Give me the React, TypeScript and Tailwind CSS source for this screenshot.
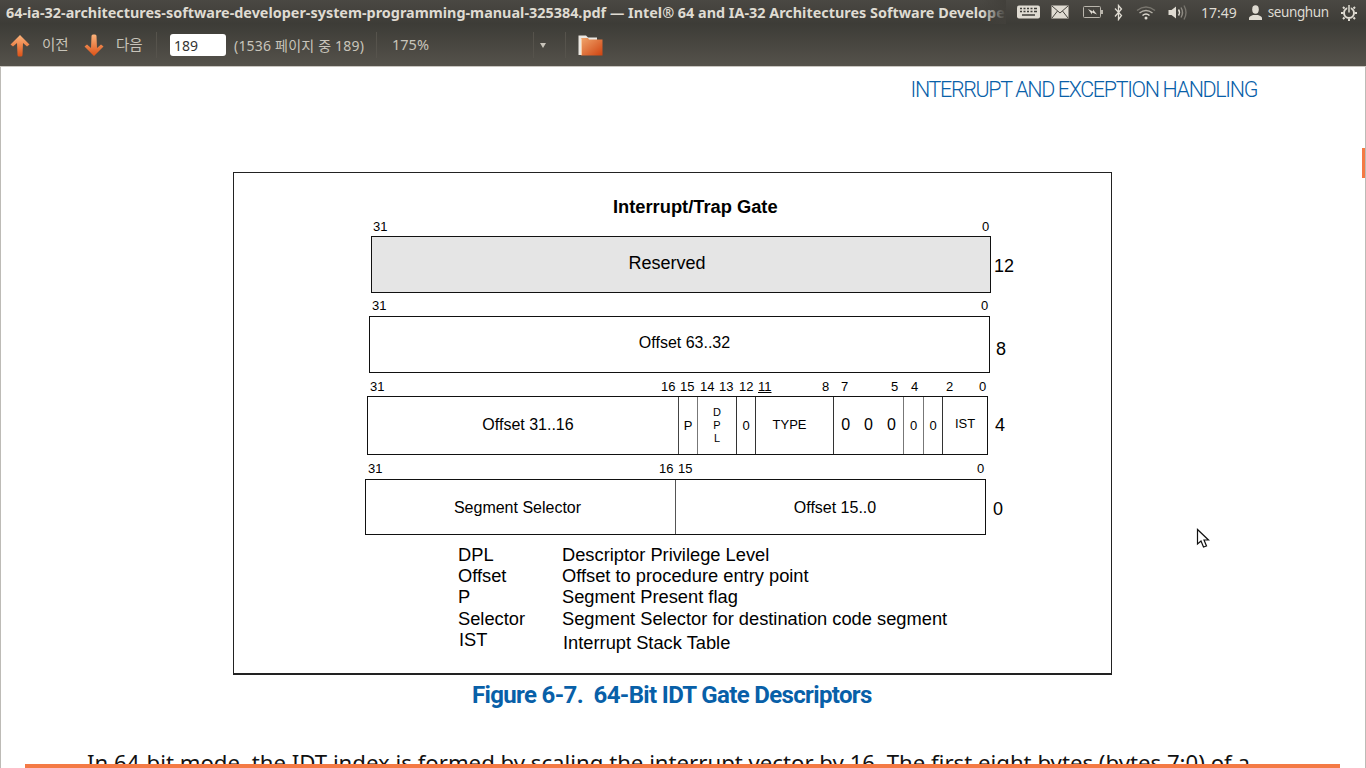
import React from 'react';

const panelFont = "font-['Noto_Sans','Noto_Sans_CJK_KR',sans-serif]";
const docFont = "font-['Liberation_Sans',Arial,sans-serif]";
const manualFont = "font-['Roboto',sans-serif]";

function BigArrow({ down }: { down?: boolean }) {
  const id = down ? 'arrowDown' : 'arrowUp';
  return (
    <svg width="20" height="23" viewBox="0 0 20 23" className={down ? 'rotate-180' : ''}>
      <defs>
        <linearGradient id={id} x1="0" y1={down ? '1' : '0'} x2="0" y2={down ? '0' : '1'}>
          <stop offset="0" stopColor="#fbb47c" />
          <stop offset="1" stopColor="#dd5217" />
        </linearGradient>
      </defs>
      <path
        d="M10 1 L19.500 10.500 L17 12.500 L13 9 L12.500 21 Q12.500 22.500 11 22.500 L9 22.500 Q7.500 22.500 7.500 21 L7 9 L3 12.500 L0.500 10.500 Z"
        fill={`url(#${id})`}
      />
    </svg>
  );
}

function Folder() {
  return (
    <svg width="25" height="21" viewBox="0 0 25 21">
      <defs>
        <linearGradient id="folderFront" x1="0" y1="0" x2="1" y2="1">
          <stop offset="0" stopColor="#f0a56c" />
          <stop offset="1" stopColor="#cf4310" />
        </linearGradient>
      </defs>
      <path d="M0.500 0.500 L8 0.500 L10 2.500 L19 2.500 L19 20 L0.500 20 Z" fill="#ece8e2" />
      <path d="M3 3 L10 3 L11 4.500 L24.500 4.500 L24.500 20.500 L3 20.500 Z" fill="url(#folderFront)" />
      <path d="M3.500 20 L3.500 3.500" stroke="#f7c9a0" strokeWidth="1" />
    </svg>
  );
}

function TrayIcons() {
  return (
    <>
      {/* keyboard */}
      <svg width="23" height="14" viewBox="0 0 23 14" className="ml-[11px]">
        <rect x="0" y="0.500" width="23" height="13" rx="2" fill="#dfdbd2" />
        <path
          d="M3 3.500h2M6.500 3.500h2M10 3.500h2M13.500 3.500h2M17 3.500h3M3 6.500h2M6.500 6.500h2M10 6.500h2M13.500 6.500h2M17 6.500h3M5 10h13"
          stroke="#3f3e39"
          strokeWidth="1.500"
        />
      </svg>
      {/* mail */}
      <svg width="18" height="14" viewBox="0 0 18 14" className="ml-[11px]">
        <rect x="0.500" y="0.500" width="17" height="13" fill="#dfdbd2" />
        <path d="M1 1 L9 8 L17 1 M1 13 L6.500 6 M17 13 L11.500 6" stroke="#45433e" strokeWidth="1" fill="none" />
      </svg>
      {/* battery */}
      <svg width="21" height="14" viewBox="0 0 21 14" className="ml-[14px]">
        <rect x="0.500" y="1.500" width="17" height="11" rx="1" fill="none" stroke="#b9b5ac" />
        <rect x="18" y="5" width="2" height="4" fill="#b9b5ac" />
        <path d="M5 4 L10 6.500 L10 4.500 L14 9.500 L9 7.500 L9 9.500 Z" fill="#dfdbd2" />
      </svg>
      {/* bluetooth */}
      <svg width="9" height="17" viewBox="0 0 9 17" className="ml-[10px]">
        <path d="M1 4.500 L7.500 11.500 L4.500 15.500 L4.500 1.500 L7.500 5 L1 12.500" fill="none" stroke="#dfdbd2" strokeWidth="1.300" />
      </svg>
      {/* wifi */}
      <svg width="20" height="15" viewBox="0 0 20 15" className="ml-[13px]">
        <path d="M1 5.500 Q10 -1.500 19 5.500" fill="none" stroke="#78756e" strokeWidth="1.500" />
        <path d="M3.500 8 Q10 3 16.500 8" fill="none" stroke="#b5b1a8" strokeWidth="1.500" />
        <path d="M6.500 10.500 Q10 7.500 13.500 10.500" fill="none" stroke="#dfdbd2" strokeWidth="1.500" />
        <circle cx="10" cy="13" r="1.500" fill="#dfdbd2" />
      </svg>
      {/* volume */}
      <svg width="20" height="17" viewBox="0 0 20 17" className="ml-[12px]">
        <path d="M0.500 6 L3.500 6 L8 2.500 L8 14.500 L3.500 11 L0.500 11 Z" fill="#dfdbd2" />
        <path d="M10.500 5.500 Q12.500 8.500 10.500 11.500" fill="none" stroke="#dfdbd2" strokeWidth="1.400" />
        <path d="M13 3.500 Q16 8.500 13 13.500" fill="none" stroke="#8f8b83" strokeWidth="1.400" />
        <path d="M16 1.500 Q20 8.500 16 15.500" fill="none" stroke="#78756e" strokeWidth="1.400" />
      </svg>
    </>
  );
}

function UserIcon() {
  return (
    <svg width="13" height="15" viewBox="0 0 13 15" className="ml-[12px]">
      <ellipse cx="6.500" cy="4.500" rx="3.300" ry="4.200" fill="#dfdbd2" />
      <path d="M0 15 L0 13 Q0 11.500 4 10 L9 10 Q13 11.500 13 13 L13 15 Z" fill="#dfdbd2" />
    </svg>
  );
}

function PowerIcon() {
  return (
    <svg width="16" height="17" viewBox="0 0 16 17" className="ml-[12px]">
      <circle cx="8" cy="9" r="5" fill="none" stroke="#dfdbd2" strokeWidth="2" />
      <path
        d="M2 9h-2M14 9h2M8 15v2M3.500 4.500l-1.500-1.500M12.500 4.500l1.500-1.500M3.500 13.500l-1.500 1.500M12.500 13.500l1.500 1.500"
        stroke="#dfdbd2"
        strokeWidth="2"
      />
      <path d="M8 0 L8 9" stroke="#45433e" strokeWidth="3.500" />
      <path d="M8 1 L8 8.500" stroke="#dfdbd2" strokeWidth="1.500" />
    </svg>
  );
}

function TitleBar() {
  return (
    <div className={`flex h-6 items-center bg-gradient-to-b from-[#4a4843] to-[#3d3c37] pl-[6px] ${panelFont}`}>
      <div className="relative w-[1000px] shrink-0 overflow-hidden whitespace-nowrap">
        <span className="text-[14.4px] font-bold text-[#dfdbd2]">
          64-ia-32-architectures-software-developer-system-programming-manual-325384.pdf — Intel® 64 and IA-32 Architectures Software Developer's Manual
        </span>
        <div className="absolute top-0 right-0 h-full w-6 bg-gradient-to-r from-transparent to-[#42403b]" />
      </div>
      <div className="flex items-center">
        <TrayIcons />
        <span className="ml-[13px] text-[14px] text-[#dfdbd2]">17:49</span>
        <UserIcon />
        <span className="ml-[6px] text-[13.5px] tracking-[-0.4px] text-[#dfdbd2]">seunghun</span>
        <PowerIcon />
      </div>
    </div>
  );
}

function Sep({ className }: { className: string }) {
  return <div className={`h-[26px] w-px bg-[#56534c] ${className}`} />;
}

function Toolbar() {
  return (
    <div className={`flex h-[43px] items-center border-b border-[#c9c6c0] bg-gradient-to-b from-[#3d3c37] to-[#55524b] pl-[10px] text-[14.5px] text-[#c8c4ba] ${panelFont}`}>
      <BigArrow />
      <span className="ml-[12px] w-[30px]">이전</span>
      <div className="ml-[12px]">
        <BigArrow down />
      </div>
      <span className="ml-[12px] w-[30px]">다음</span>
      <Sep className="ml-[10px]" />
      <div className="ml-[13px] flex h-[22px] w-[56px] items-center rounded-[3px] bg-white pl-[4px] text-[14px] text-[#333]">189</div>
      <span className="ml-[8px] w-[141px] text-[14px] tracking-[0.2px] whitespace-nowrap">(1536 페이지 중 189)</span>
      <Sep className="ml-[1px]" />
      <span className="ml-[15px] w-[36px]">175%</span>
      <Sep className="ml-[105px]" />
      <span className="ml-[6px] h-0 w-0 border-x-[3px] border-t-[5px] border-x-transparent border-t-[#c8c4ba]" />
      <Sep className="ml-[19px]" />
      <div className="ml-[12px]">
        <Folder />
      </div>
    </div>
  );
}

function BitRow({ className, children }: { className: string; children: React.ReactNode }) {
  return <div className={`relative h-[14px] text-[13px] leading-[14px] text-black ${className}`}>{children}</div>;
}

function Figure() {
  return (
    <div className={`ml-[232px] h-[503px] w-[879px] border border-b-2 border-[#222] pt-[24px] ${docFont}`}>
      <div className="ml-[379px] text-[18.3px] leading-[20px] font-bold text-black">Interrupt/Trap Gate</div>

      {/* Reserved */}
      <div className="mt-[3px] ml-[137px]">
        <BitRow className="w-[620px]">
          <span className="absolute left-[2px]">31</span>
          <span className="absolute left-[611px]">0</span>
        </BitRow>
        <div className="mt-[2px] flex items-center">
          <div className="flex h-[57px] w-[620px] items-center justify-center border border-[#111] bg-[#e5e5e5] pr-[28px] pb-[3px] text-[18px]">Reserved</div>
          <span className="ml-[3px] pt-[4px] text-[18px]">12</span>
        </div>
      </div>

      {/* Offset 63..32 */}
      <div className="mt-[6px] ml-[135px]">
        <BitRow className="w-[620px]">
          <span className="absolute left-[3px]">31</span>
          <span className="absolute left-[612px]">0</span>
        </BitRow>
        <div className="mt-[3px] flex items-center">
          <div className="flex h-[57px] w-[621px] items-center justify-center border border-[#111] pb-[3px] pl-[10px] text-[16px]">Offset 63..32</div>
          <span className="ml-[6px] pt-[10px] text-[18px]">8</span>
        </div>
      </div>

      {/* Offset 31..16 row */}
      <div className="mt-[7px] ml-[133px]">
        <BitRow className="w-[630px]">
          <span className="absolute left-[3px]">31</span>
          <span className="absolute left-[294px]">16</span>
          <span className="absolute left-[313px]">15</span>
          <span className="absolute left-[333px]">14</span>
          <span className="absolute left-[352px]">13</span>
          <span className="absolute left-[372px]">12</span>
          <span className="absolute left-[391px] underline">11</span>
          <span className="absolute left-[455px]">8</span>
          <span className="absolute left-[474px]">7</span>
          <span className="absolute left-[524px]">5</span>
          <span className="absolute left-[544px]">4</span>
          <span className="absolute left-[579px]">2</span>
          <span className="absolute left-[612px]">0</span>
        </BitRow>
        <div className="mt-[2px] flex items-center">
          <div className="flex h-[59px] w-[621px] border border-[#111] text-[13px]">
            <div className="flex w-[311px] items-center justify-center border-r border-[#444] pb-[1px] pl-[10px] text-[16px]">Offset 31..16</div>
            <div className="flex w-[19px] items-center justify-center border-r border-[#777]">P</div>
            <div className="flex w-[39px] flex-col items-center justify-center border-r border-[#333] text-[11px] leading-[13px]">
              <span>D</span>
              <span>P</span>
              <span>L</span>
            </div>
            <div className="flex w-[19px] items-center justify-center border-r border-[#333]">0</div>
            <div className="flex w-[78px] items-center justify-center border-r border-[#333] pr-[10px] pb-[1px]">TYPE</div>
            <div className="flex w-[70px] items-center justify-center gap-[14px] border-r border-[#777] pb-[1px] text-[16px]">
              <span>0</span>
              <span>0</span>
              <span>0</span>
            </div>
            <div className="flex w-[20px] items-center justify-center border-r border-[#777]">0</div>
            <div className="flex w-[19px] items-center justify-center border-r border-[#333]">0</div>
            <div className="flex flex-1 items-center justify-center pb-[3px]">IST</div>
          </div>
          <span className="ml-[7px] text-[18px]">4</span>
        </div>
      </div>

      {/* Segment Selector row */}
      <div className="mt-[7px] ml-[131px]">
        <BitRow className="w-[630px]">
          <span className="absolute left-[3px]">31</span>
          <span className="absolute left-[294px]">16</span>
          <span className="absolute left-[313px]">15</span>
          <span className="absolute left-[612px]">0</span>
        </BitRow>
        <div className="mt-[3px] flex items-center">
          <div className="flex h-[56px] w-[621px] border border-[#111] text-[16px]">
            <div className="flex w-[310px] items-center justify-center border-r border-[#555] pt-[2px] pr-[6px]">Segment Selector</div>
            <div className="flex flex-1 items-center justify-center pt-[2px] pl-[9px]">Offset 15..0</div>
          </div>
          <span className="ml-[7px] pt-[4px] text-[18px]">0</span>
        </div>
      </div>

      {/* Legend */}
      <div className="mt-[9px] ml-[224px] text-[18.3px] leading-[21px] text-black">
        <div className="flex">
          <span className="w-[104px]">DPL</span>
          <span>Descriptor Privilege Level</span>
        </div>
        <div className="flex">
          <span className="w-[104px]">Offset</span>
          <span>Offset to procedure entry point</span>
        </div>
        <div className="flex">
          <span className="w-[104px]">P</span>
          <span>Segment Present flag</span>
        </div>
        <div className="mt-px flex">
          <span className="w-[104px]">Selector</span>
          <span>Segment Selector for destination code segment</span>
        </div>
        <div className="flex">
          <span className="ml-px w-[104px]">IST</span>
          <span className="pt-[3px]">Interrupt Stack Table</span>
        </div>
      </div>
    </div>
  );
}

export default function App() {
  return (
    <div className="relative flex h-screen w-screen flex-col overflow-hidden bg-white">
      <TitleBar />
      <Toolbar />
      <div className="flex-1 overflow-hidden border-x border-[#bdbbb6]">
        <div className={`mt-[9px] mr-[108px] text-right text-[21.5px] leading-[28px] font-light tracking-[-1.35px] text-[#0860a8] ${manualFont}`}>
          INTERRUPT AND EXCEPTION HANDLING
        </div>
        <div className="mt-[68px]">
          <Figure />
        </div>
        <div className={`mt-[4px] ml-[471px] text-[24px] leading-[32px] font-bold tracking-[-0.65px] whitespace-pre text-[#0860a8] ${manualFont}`}>
          Figure 6-7.  64-Bit IDT Gate Descriptors
        </div>
        <div className={`mt-[38px] ml-[86px] text-[22.2px] leading-[28px] whitespace-nowrap text-[#111] ${panelFont}`}>
          In 64-bit mode, the IDT index is formed by scaling the interrupt vector by 16. The first eight bytes (bytes 7:0) of a
        </div>
      </div>

      {/* scroll markers */}
      <div className="absolute top-[148px] right-px h-[30px] w-[3px] bg-[#f47a45]" />
      <div className="absolute bottom-0 left-[25px] h-[4px] w-[1315px] bg-[#f47a45]" />

      {/* mouse pointer */}
      <svg width="14" height="21" viewBox="0 0 14 21" className="absolute top-[528px] left-[1196px]">
        <path d="M1.500 1.500 L1.500 16 L5 13 L7.500 19 L10.500 18 L8 12 L12.500 12 Z" fill="#fff" stroke="#111" strokeWidth="1.200" />
      </svg>
    </div>
  );
}
